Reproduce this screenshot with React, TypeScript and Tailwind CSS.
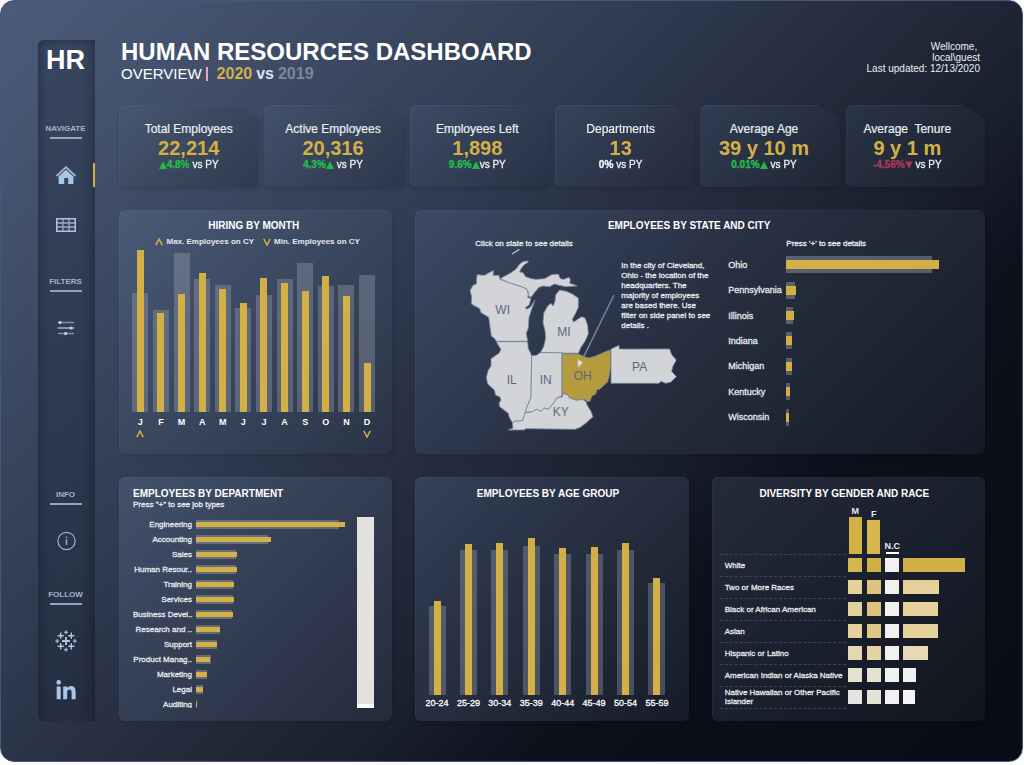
import React from "react";
import { FaLinkedinIn } from "react-icons/fa";

/* ---------- data ---------- */

type Kpi = {
  label: string;
  value: string;
  delta: string;
  trend: "up" | "down" | "flat";
  arrowFirst?: boolean;
  tight?: boolean;
  tone: string;
};

const kpis: Kpi[] = [
  { label: "Total Employees", value: "22,214", delta: "4.8%", trend: "up", arrowFirst: true, tone: "from-[#475772] to-[#303a4d]" },
  { label: "Active Employees", value: "20,316", delta: "4.3%", trend: "up", tone: "from-[#43516d] to-[#2d374a] pr-0.5" },
  { label: "Employees Left", value: "1,898", delta: "9.6%", trend: "up", tight: true, tone: "from-[#3d4b66] to-[#283245] pr-1" },
  { label: "Departments", value: "13", delta: "0%", trend: "flat", tone: "from-[#37445c] to-[#242a3a] pr-2" },
  { label: "Average Age", value: "39 y 10 m", delta: "0.01%", trend: "up", tone: "from-[#313d53] to-[#1e2634] pr-3" },
  { label: "Average\u00a0 Tenure", value: "9 y 1 m", delta: "-4.56%", trend: "down", tone: "from-[#2a3448] to-[#1a202c] pr-4" },
];

type Bar = { label: string; now: number; prev: number; mark?: "max" | "min" };

const months: Bar[] = [
  { label: "J", now: 162, prev: 119, mark: "max" },
  { label: "F", now: 99, prev: 102 },
  { label: "M", now: 118, prev: 159 },
  { label: "A", now: 139, prev: 133 },
  { label: "M", now: 123, prev: 127 },
  { label: "J", now: 109, prev: 104 },
  { label: "J", now: 134, prev: 117 },
  { label: "A", now: 129, prev: 133 },
  { label: "S", now: 121, prev: 149 },
  { label: "O", now: 136, prev: 126 },
  { label: "N", now: 116, prev: 127 },
  { label: "D", now: 49, prev: 137, mark: "min" },
];

const states: Bar[] = [
  { label: "Ohio", now: 153, prev: 146 },
  { label: "Pennsylvania", now: 10, prev: 9 },
  { label: "Illinois", now: 8, prev: 7 },
  { label: "Indiana", now: 6, prev: 6 },
  { label: "Michigan", now: 6, prev: 6 },
  { label: "Kentucky", now: 4, prev: 4 },
  { label: "Wisconsin", now: 3, prev: 3 },
];

const departments: Bar[] = [
  { label: "Engineering", now: 149, prev: 143 },
  { label: "Accounting", now: 75, prev: 72 },
  { label: "Sales", now: 41, prev: 40 },
  { label: "Human Resour..", now: 41, prev: 40 },
  { label: "Training", now: 38, prev: 37 },
  { label: "Services", now: 38, prev: 37 },
  { label: "Business Devel..", now: 37, prev: 36 },
  { label: "Research and ..", now: 24, prev: 24 },
  { label: "Support", now: 21, prev: 21 },
  { label: "Product Manag..", now: 14, prev: 15 },
  { label: "Marketing", now: 11, prev: 11 },
  { label: "Legal", now: 7, prev: 7 },
  { label: "Auditing", now: 1, prev: 1 },
];

const ages: Bar[] = [
  { label: "20-24", now: 94, prev: 89 },
  { label: "25-29", now: 151, prev: 145 },
  { label: "30-34", now: 152, prev: 145 },
  { label: "35-39", now: 157, prev: 149 },
  { label: "40-44", now: 147, prev: 141 },
  { label: "45-49", now: 148, prev: 141 },
  { label: "50-54", now: 152, prev: 145 },
  { label: "55-59", now: 117, prev: 112 },
];

const races = [
  { label: "White", m: "bg-[#d5b64f]", f: "bg-[#d3b046]", bar: "bg-[#d3b046]", width: 62 },
  { label: "Two or More Races", m: "bg-[#e4d19b]", f: "bg-[#ddc47c]", bar: "bg-[#e4d19b]", width: 36 },
  { label: "Black or African American", m: "bg-[#e4d19b]", f: "bg-[#ddc47c]", bar: "bg-[#e4d19b]", width: 35 },
  { label: "Asian", m: "bg-[#e4d19b]", f: "bg-[#dfc987]", bar: "bg-[#e4d19b]", width: 35 },
  { label: "Hispanic or Latino", m: "bg-[#e4d8b0]", f: "bg-[#e3d5a6]", bar: "bg-[#e5d9b6]", width: 25 },
  { label: "American Indian or Alaska Native", m: "bg-[#e6e1d0]", f: "bg-[#e5e0cf]", bar: "bg-[#f1f1f2]", width: 13 },
  { label: "Native Hawaiian or Other Pacific Islander", m: "bg-[#e5e3df]", f: "bg-[#e5e2d8]", bar: "bg-[#f4f4f5]", width: 12 },
];

/* ---------- shared pieces ---------- */

function Card({ tone, className = "", children }: { tone: string; className?: string; children: React.ReactNode }) {
  return (
    <section
      className={`rounded-md bg-linear-135 shadow-[inset_1px_1px_0_rgba(130,155,200,0.07),2px_2px_4px_rgba(0,0,0,0.1)] ${tone} ${className}`}
    >
      {children}
    </section>
  );
}

function Title({ className = "", children }: { className?: string; children: React.ReactNode }) {
  return <h2 className={`text-[10px] leading-3 font-bold whitespace-nowrap ${className}`}>{children}</h2>;
}

function Caret({ down = false }: { down?: boolean }) {
  return (
    <svg viewBox="0 0 8 8" className="size-2 shrink-0 fill-none stroke-[#d3b046]" strokeWidth="1.5" aria-hidden="true">
      <path d={down ? "M0.8 0.8 4 7 7.2 0.8" : "M0.8 7.2 4 1 7.2 7.2"} />
    </svg>
  );
}

function Trend({ trend }: { trend: Kpi["trend"] }) {
  if (trend === "flat") return null;
  return (
    <svg
      viewBox="0 0 8 8"
      className={`size-2 shrink-0 ${trend === "up" ? "fill-[#27b84a]" : "fill-[#a63a55]"}`}
      aria-hidden="true"
    >
      <path d={trend === "up" ? "M4 0.3 8 8H0Z" : "M0.3 0.5H7.7L4 7.5Z"} />
    </svg>
  );
}

function KpiCard({ kpi }: { kpi: Kpi }) {
  const deltaColor =
    kpi.trend === "up" ? "text-[#27b84a]" : kpi.trend === "down" ? "text-[#a63a55]" : "text-[#f1f3f6]";
  return (
    <div className="drop-shadow-[1px_2px_2px_rgba(0,0,0,0.16)]">
      <article
        className={`flex h-[82px] flex-col items-center rounded-md bg-linear-135 pt-[17px] shadow-[inset_1px_1px_0_rgba(130,155,200,0.09)] [clip-path:polygon(0_0,84%_0,97%_13%,99%_16%,100%_21%,100%_100%,0_100%)] ${kpi.tone}`}
      >
        <h2 className="text-xs leading-[14px] text-[#eceff3] [-webkit-text-stroke:0.2px]">{kpi.label}</h2>
        <p className="text-xl leading-6 font-bold text-[#d3b046]">{kpi.value}</p>
        <p className="flex items-center text-[10px] leading-[10px] text-[#eceff3]">
          {kpi.arrowFirst && <Trend trend={kpi.trend} />}
          <b className={`[-webkit-text-stroke:0.4px] ${deltaColor}`}>{kpi.delta}</b>
          {!kpi.arrowFirst && <Trend trend={kpi.trend} />}
          <span className={`[-webkit-text-stroke:0.3px] ${kpi.tight ? "" : "ml-[3px]"}`}>vs PY</span>
        </p>
      </article>
    </div>
  );
}

function Column({ bar, area, width }: { bar: Bar; area: string; width: string }) {
  return (
    <div className={`grid items-end justify-items-center ${area}`}>
      <div className={`bg-[#a9aeb8]/33 [grid-area:1/1] ${width}`} style={{ height: bar.prev }} />
      <div className="w-[7px] bg-[#d3b046] [grid-area:1/1]" style={{ height: bar.now }} />
    </div>
  );
}

function RowBar({ bar, back, front }: { bar: Bar; back: string; front: string }) {
  return (
    <div className="grid items-center justify-items-start">
      <div className={`bg-[#a9aeb8]/40 [grid-area:1/1] ${back}`} style={{ width: bar.prev }} />
      <div className={`bg-[#d3b046] [grid-area:1/1] ${front}`} style={{ width: bar.now }} />
    </div>
  );
}

/* ---------- side bar ---------- */

function NavSection({ label, className = "", children }: { label: string; className?: string; children: React.ReactNode }) {
  return (
    <section className={className}>
      <div className="flex flex-col items-center pr-0.5">
        <h2 className="text-[8px] leading-[10px] font-bold text-[#a5b3c7]">{label}</h2>
        <div className="mt-[3px] h-0.5 w-8 bg-[#97a3b6]" />
      </div>
      <div className="mt-6 flex flex-col gap-[26px]">{children}</div>
    </section>
  );
}

function NavLink({ label, active = false, children }: { label: string; active?: boolean; children: React.ReactNode }) {
  return (
    <a
      href="#"
      aria-label={label}
      className={`flex h-6 items-center justify-center border-r-2 text-[#a9c6e8] ${active ? "border-r-[#d3b046]" : "border-r-transparent"}`}
    >
      {children}
    </a>
  );
}

function HomeIcon() {
  return (
    <svg viewBox="0 0 20 20" className="size-5" aria-hidden="true">
      <path d="M0.6 11 10 2.2 19.4 11" fill="none" stroke="#a9b9cf" strokeWidth="1.8" />
      <path d="M2.6 11.4 10 4.8 17.4 11.4V19H12.2V13H8.2V19H2.6Z" fill="#a9c6e8" />
    </svg>
  );
}

function TableIcon() {
  return (
    <svg viewBox="0 0 20 14" className="h-3.5 w-5 fill-none" aria-hidden="true">
      <path d="M7 1V13M13 1V13M1 5H19M1 9H19" stroke="#9dabc0" strokeWidth="1.3" />
      <rect x="0.75" y="0.75" width="18.5" height="12.5" stroke="#a9c6e8" strokeWidth="1.5" />
    </svg>
  );
}

function SlidersIcon() {
  return (
    <svg viewBox="0 0 18 16" className="h-4 w-[18px]" aria-hidden="true">
      <path d="M1 2.5H17M1 13.5H17" stroke="#7f8fa9" strokeWidth="1.5" />
      <path d="M0.5 8H17" stroke="#a3b1c5" strokeWidth="1.5" />
      <g fill="#c3d6ea">
        <circle cx="3" cy="2.5" r="1.6" />
        <circle cx="14" cy="8" r="1.6" />
        <circle cx="8.6" cy="13.5" r="1.6" />
      </g>
    </svg>
  );
}

function InfoIcon() {
  return (
    <svg viewBox="0 0 20 20" className="size-5 fill-none stroke-[#a3afc2]" strokeWidth="1.2" aria-hidden="true">
      <circle cx="10.5" cy="10" r="8.6" />
      <path d="M10.5 8.2V14M10.5 5.4V6.9" strokeWidth="1.4" />
    </svg>
  );
}

function SparkIcon() {
  return (
    <svg viewBox="0 0 22 22" className="size-[22px] fill-none stroke-[#b3c6dc]" aria-hidden="true">
      <path
        d="M5.7 2.6V8.8M2.6 5.7H8.8M16.3 2.6V8.8M13.2 5.7H19.4M5.7 13.2V19.4M2.6 16.3H8.8M16.3 13.2V19.4M13.2 16.3H19.4"
        strokeWidth="1.4"
      />
      <path d="M11 7V15M7 11H15" stroke="#a9c6e8" strokeWidth="1.8" />
      <path
        d="M11 0.2V4.2M9 2.2H13M11 17.8V21.8M9 19.8H13M2.2 9V13M0.2 11H4.2M19.8 9V13M17.8 11H21.8"
        strokeWidth="1.1"
      />
    </svg>
  );
}

function Sidebar() {
  return (
    <nav className="flex w-[57px] shrink-0 flex-col rounded-l-md bg-[#1c2536]/35 pt-2 pb-[18px] shadow-[inset_7px_5px_8px_-5px_rgba(10,15,30,0.35),inset_-10px_0_9px_-6px_rgba(10,15,30,0.28)]">
      <div className="pr-0.5 text-center text-[27px] leading-6 font-bold">HR</div>
      <NavSection label="NAVIGATE" className="mt-[52px]">
        <NavLink label="Overview" active>
          <HomeIcon />
        </NavLink>
        <NavLink label="Table">
          <TableIcon />
        </NavLink>
      </NavSection>
      <NavSection label="FILTERS" className="mt-10">
        <NavLink label="Filter options">
          <SlidersIcon />
        </NavLink>
      </NavSection>
      <NavSection label="INFO" className="mt-auto">
        <NavLink label="About">
          <InfoIcon />
        </NavLink>
      </NavSection>
      <NavSection label="FOLLOW" className="mt-[37px]">
        <NavLink label="Tableau">
          <SparkIcon />
        </NavLink>
        <NavLink label="LinkedIn">
          <FaLinkedinIn className="size-[22px]" />
        </NavLink>
      </NavSection>
    </nav>
  );
}

/* ---------- panels ---------- */

function HiringPanel() {
  return (
    <Card tone="from-[#4a5a77] to-[#2a3446]" className="pt-2.5 pr-[15px] pb-4 pl-[11px]">
      <Title className="text-center">HIRING BY MONTH</Title>
      <p className="mt-[5px] flex items-center justify-center gap-[3px] pl-2 text-[8px] leading-[10px] font-bold whitespace-nowrap text-[#e6e9ee]">
        <Caret />
        <span className="pr-1.5">Max. Employees on CY</span>
        <Caret down />
        <span>Min. Employees on CY</span>
      </p>
      <div className="grid grid-cols-12">
        {months.map((m, i) => (
          <div key={i} className="flex flex-col items-center">
            <Column bar={m} area="h-[165px]" width="w-4" />
            <span className="mt-[5px] text-[9px] leading-[10px] font-bold">{m.label}</span>
            <span className="mt-[3px] h-2">{m.mark && <Caret down={m.mark === "min"} />}</span>
          </div>
        ))}
      </div>
    </Card>
  );
}

function StatesMap() {
  return (
    <svg viewBox="195 147 720 555" className="h-[185px] w-[240px]" role="img" aria-label="Map of states">
      <g fill="#d2d4d7" stroke="#77859c" strokeWidth="2.5" strokeLinejoin="round">
        <path d="M234 224 256 226 284 211 282 226 300 226 303 238 330 248 368 260 384 268 388 282 386 292 396 296 390 316 380 322 382 328 394 322 408 300 398 328 390 352 388 384 382 400 386 424 292 424 287 416 277 408 273 380 269 352 246 338 242 326 217 312 218 290 213 272 222 256 232 252Z" />
        <path d="M303 236 336 218 344 212 352 206 362 192 374 184 388 183 386 188 376 194 366 206 362 216 372 218 380 230 398 236 410 238 436 236 458 224 478 222 484 236 494 238 510 232 514 238 512 250 526 254 534 258 500 260 480 256 466 252 452 260 432 258 420 262 408 276 396 292 388 288 388 276 382 266 362 258 330 248Z" />
        <path d="M482 270 502 274 520 282 538 294 538 322 530 340 520 358 524 366 536 358 548 350 558 354 566 376 568 402 558 424 546 442 538 460 424 458 434 440 440 414 438 392 432 368 434 340 446 318 456 310 462 318 468 304 470 284Z" />
        <path d="M292 425H386L388 446 398 466 396 592 386 616 378 640 372 660 362 664 352 662 340 668 330 650 328 640 302 620 300 610 306 600 302 590 290 586 286 570 266 552 262 532 268 510 276 498 276 476 300 460 306 448 298 436Z" />
        <path d="M398 467 412 466 424 458H489V588L474 594 466 606 460 614 448 628 436 624 426 634 412 628 398 636 378 636 386 616 396 592Z" />
        <path d="M378 638 398 636 412 628 426 634 436 624 448 628 460 614 466 606 474 594 490 590 492 580 506 584 512 594 532 600 550 598 560 604 566 618 576 634 582 650 562 668 544 682 528 688 380 686 376 690 328 690 342 684 340 668 352 662 362 664 372 660Z" />
        <path d="M489 461 538 462 556 470 570 474 590 468 604 462 622 454 635 450V496L632 520 626 546 612 558 602 568 594 568 590 582 578 588 574 602 566 606 558 598 532 600 512 594 506 584 494 578 489 588Z" fill="#b69b3e" />
        <path d="M636 447 660 436 661 447H812L818 464 832 480 822 498 818 514 832 530 816 546 800 550 786 544 780 550H636Z" />
      </g>
      <path d="M339 162 361 148" stroke="#b8bfca" strokeWidth="4" />
      <path d="M645 285 553 472" stroke="#7d899d" strokeWidth="4" />
      <path d="M537 478 551 488 537 502Z" fill="#e9e6dc" stroke="#b8bfca" strokeWidth="2" />
      <g className="fill-[#5b6780] text-[36px]" textAnchor="middle">
        <text x="311" y="343">WI</text>
        <text x="495" y="409">MI</text>
        <text x="338" y="553">IL</text>
        <text x="440" y="553">IN</text>
        <text x="551" y="541">OH</text>
        <text x="722" y="512">PA</text>
        <text x="485" y="648">KY</text>
      </g>
    </svg>
  );
}

function StatePanel() {
  return (
    <Card tone="from-[#3c4a65] via-[#262e3f] to-[#151a25]" className="col-span-2 pt-2.5">
      <Title className="pr-[22px] text-center">EMPLOYEES BY STATE AND CITY</Title>
      <div className="mt-[7px] flex gap-6 pl-[49px] text-[#e6e9ee]">
        <div className="relative">
          <p className="pl-[11px] text-[8px] leading-[10px] [-webkit-text-stroke:0.3px]">Click on state to see details</p>
          <StatesMap />
          <p className="absolute top-[22px] left-[157px] text-[8px] leading-[10px] whitespace-nowrap [-webkit-text-stroke:0.3px]">
            In the city of Cleveland,
            <br />
            Ohio - the location of the
            <br />
            headquarters. The
            <br />
            majority of employees
            <br />
            are based there. Use
            <br />
            filter on side panel to see
            <br />
            details .
          </p>
        </div>
        <div className="flex-1">
          <p className="pl-[58px] text-[8px] leading-[10px] [-webkit-text-stroke:0.3px]">Press &apos;+&apos; to see details</p>
          <ul className="mt-[3px] grid h-[178px] grid-rows-7">
            {states.map((s) => (
              <li key={s.label} className="grid grid-cols-[58px_1fr] items-center text-[9px] leading-3">
                <span className="[-webkit-text-stroke:0.3px]">{s.label}</span>
                <RowBar bar={s} back="h-[17px]" front="h-[9px]" />
              </li>
            ))}
          </ul>
        </div>
      </div>
    </Card>
  );
}

function DepartmentPanel() {
  return (
    <Card tone="from-[#43516c] to-[#242b3c]" className="pt-[11px] pr-[18px] pb-[13px] pl-3.5">
      <Title>EMPLOYEES BY DEPARTMENT</Title>
      <p className="text-[8px] leading-[10px] text-[#e6e9ee] [-webkit-text-stroke:0.3px]">Press &quot;+&quot; to see job types</p>
      <div className="mt-[7px] flex h-[191px] justify-between overflow-hidden">
        <ul>
          {departments.map((d) => (
            <li key={d.label} className="grid h-[15px] grid-cols-[59px_1fr] items-center gap-1 text-[8px] leading-[15px]">
              <span className="text-right whitespace-nowrap text-[#e6e9ee] [-webkit-text-stroke:0.3px]">{d.label}</span>
              <RowBar bar={d} back="h-[9px]" front="h-[5px]" />
            </li>
          ))}
        </ul>
        <div className="w-[17px] border-b-4 border-white bg-[#e4e2de]" />
      </div>
    </Card>
  );
}

function AgePanel() {
  return (
    <Card tone="from-[#354158] to-[#161b27]" className="pt-[11px] pr-4 pb-[13px] pl-1.5">
      <Title className="pl-0.5 text-center">EMPLOYEES BY AGE GROUP</Title>
      <div className="grid grid-cols-8">
        {ages.map((a) => (
          <div key={a.label} className="flex flex-col items-center">
            <Column bar={a} area="h-[195px]" width="w-[17px]" />
            <span className="mt-[3px] text-[9px] leading-[10px] [-webkit-text-stroke:0.3px]">{a.label}</span>
          </div>
        ))}
      </div>
    </Card>
  );
}

function DiversityPanel() {
  return (
    <Card tone="from-[#242b3b] to-[#11151f]" className="pt-[11px] pl-2">
      <Title className="pr-4 text-center">DIVERSITY BY GENDER AND RACE</Title>
      <table className="w-full table-fixed border-collapse text-left text-[#e6e9ee]">
        <colgroup>
          <col className="w-[126px]" />
          <col className="w-[19px]" />
          <col className="w-[18px]" />
          <col className="w-[19px]" />
          <col />
        </colgroup>
        <thead>
          <tr className="h-[54px] align-bottom text-[9px] leading-3 font-bold">
            <td className="border-b border-dashed border-[#3a455b] p-0" />
            <th scope="col" className="p-0 text-center">
              M
              <div className="mx-auto h-[37px] w-[13px] bg-[#d3b046]" />
            </th>
            <th scope="col" className="p-0 text-center">
              F
              <div className="mx-auto h-[34px] w-[13px] bg-[#d5b64f]" />
            </th>
            <th scope="col" className="p-0 text-center">
              <span className="-mx-1">N.C</span>
              <div className="mx-auto h-0.5 w-[13px] bg-white" />
            </th>
            <td />
          </tr>
        </thead>
        <tbody>
          {races.map((r) => (
            <tr key={r.label} className="h-[22px]">
              <th
                scope="row"
                className="border-b border-dashed border-[#3a455b] py-0 pr-0 pl-[5px] text-[8px] leading-[9px] font-normal [-webkit-text-stroke:0.3px]"
              >
                {r.label}
              </th>
              <td className="p-0">
                <div className={`mx-auto size-3.5 ${r.m}`} />
              </td>
              <td className="p-0">
                <div className={`mx-auto size-3.5 ${r.f}`} />
              </td>
              <td className="p-0">
                <div className="mx-auto size-3.5 bg-[#f1f1f2]" />
              </td>
              <td className="p-0 pl-px">
                <div className={`h-3.5 ${r.bar}`} style={{ width: r.width }} />
              </td>
            </tr>
          ))}
        </tbody>
      </table>
    </Card>
  );
}

export default function App() {
  return (
    <div className="min-h-screen bg-[#fbfbfb] pr-px pb-[3px] font-['Liberation_Sans',Arial,sans-serif] text-white">
      <div className="flex gap-6 rounded-[14px] border border-[#46587a] bg-[linear-gradient(135deg,#4b5c7b_0%,#404e69_16%,#303c51_36%,#252c3d_50%,#1a202d_62%,#0d0f1a_73%,#090b15_100%)] pt-[39px] pr-[37px] pb-10 pl-[37px]">
        <Sidebar />
        <main className="min-w-0 flex-1">
          <header className="flex justify-between pr-[5px] pl-0.5">
            <div>
              <h1 className="text-2xl leading-6 font-bold">HUMAN RESOURCES DASHBOARD</h1>
              <p className="flex items-center text-base leading-5 font-bold">
                <span className="text-[15px] font-normal">OVERVIEW</span>
                <span className="ml-1 h-3.5 w-0.5 bg-[#e3a9b4]" />
                <span className="ml-[9px] text-[#d3b046]">2020</span>
                <span className="mx-1 text-[#dde1e7]">vs</span>
                <span className="text-[#7c879a]">2019</span>
              </p>
            </div>
            <p className="pt-px text-right text-[10px] leading-[11px] text-[#eceff3]">
              Wellcome,&nbsp;
              <br />
              local\guest
              <br />
              Last updated: 12/13/2020
            </p>
          </header>
          <div className="mt-[21px] grid grid-cols-6 gap-1.5">
            {kpis.map((k) => (
              <KpiCard key={k.label} kpi={k} />
            ))}
          </div>
          <div className="mt-[23px] grid grid-cols-3 gap-[23px]">
            <HiringPanel />
            <StatePanel />
            <DepartmentPanel />
            <AgePanel />
            <DiversityPanel />
          </div>
        </main>
      </div>
    </div>
  );
}
